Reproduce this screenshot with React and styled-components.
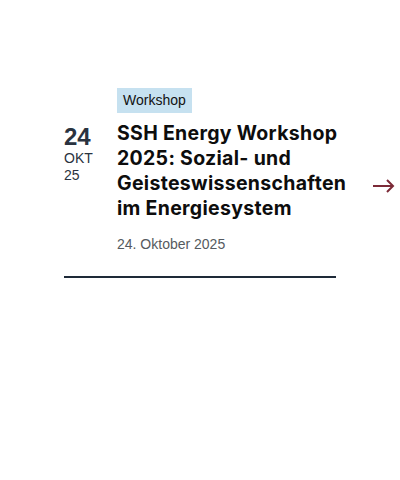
import React from "react";
import styled, { createGlobalStyle } from "styled-components";

const Global = createGlobalStyle`
  html, body { margin: 0; padding: 0; background: #fff; }
  body { font-family: "Liberation Sans", Arial, sans-serif; }
`;

const Page = styled.div`
  display: flex;
  align-items: center;
  padding: 88px 6px 0 64px;
  width: 400px;
  box-sizing: border-box;
`;

const Card = styled.article`
  width: 272px;
  flex: none;
  display: flex;
  border-bottom: 2px solid #1e2a38;
  padding-bottom: 24px;
`;

const DateCol = styled.div`
  width: 53px;
  flex: none;
  padding-top: 36px;
  color: #2a3340;
  display: flex;
  flex-direction: column;
`;

const Day = styled.span`
  font-family: "Liberation Sans", Arial, sans-serif;
  font-weight: 700;
  font-size: 24px;
  line-height: 26px;
`;

const Small = styled.span`
  font-size: 14px;
  line-height: 17px;
`;

const Content = styled.div`
  flex: 1;
  min-width: 0;
  display: flex;
  flex-direction: column;
  align-items: flex-start;
`;

const Tag = styled.span`
  background: #c6e1f0;
  color: #111;
  font-size: 14px;
  line-height: 25px;
  padding: 0 6px;
`;

const Title = styled.h2`
  margin: 8px 0 0;
  font-family: Inter, "Noto Sans", sans-serif;
  font-weight: 700;
  font-size: 19.5px;
  line-height: 25px;
  letter-spacing: 0.3px;
  color: #0d0d0d;
`;

const When = styled.div`
  margin-top: 15px;
  font-size: 14px;
  color: #555a60;
`;

const Arrow = styled.svg`
  margin-left: 37px;
  margin-top: 6px;
  flex: none;
`;

export default function App() {
  return (
    <>
      <Global />
      <Page>
        <Card>
          <DateCol>
            <Day>24</Day>
            <Small>OKT</Small>
            <Small>25</Small>
          </DateCol>
          <Content>
            <Tag>Workshop</Tag>
            <Title>SSH Energy Workshop 2025: Sozial- und Geisteswissenschaften im Energiesystem</Title>
            <When>24. Oktober 2025</When>
          </Content>
        </Card>
        <Arrow width="22" height="14" viewBox="0 0 22 14" fill="none">
          <path d="M0 7 H20 M14 1 L20 7 L14 13" stroke="#7c2a37" strokeWidth="2" />
        </Arrow>
      </Page>
    </>
  );
}
